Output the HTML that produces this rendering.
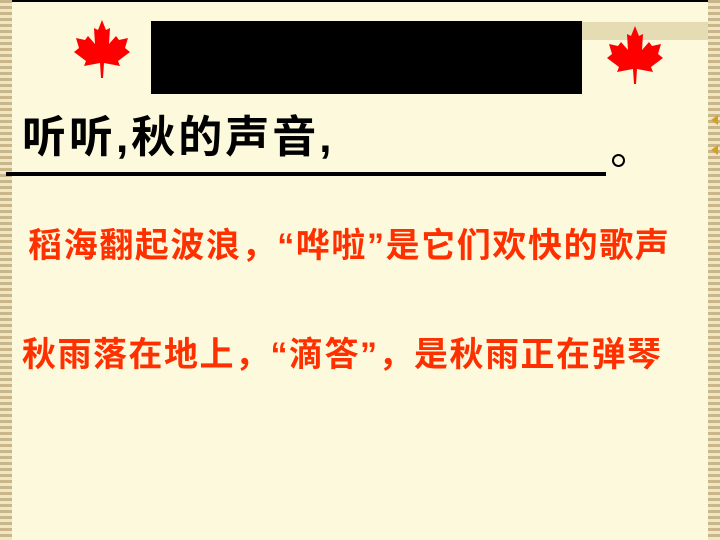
<!DOCTYPE html>
<html><head><meta charset="utf-8"><style>
body{margin:0;width:720px;height:540px;overflow:hidden;background:#fdf9dc;position:relative;font-family:"Liberation Sans","Noto Sans CJK SC",sans-serif}
.bl{position:absolute;left:0;top:0;width:12px;height:540px;background:repeating-linear-gradient(180deg,#c9b68a 0 3px,#efe6c4 3px 6px);}
.br{position:absolute;right:0;top:0;width:12px;height:540px;background:repeating-linear-gradient(180deg,#c9b68a 0 3px,#efe6c4 3px 6px);}
.top{position:absolute;left:0;top:0;width:720px;height:2px;background:#000}
.blk{position:absolute;left:151px;top:21px;width:431px;height:73px;background:#000}
.band{position:absolute;left:582px;top:22px;width:126px;height:18px;background:#e6dcb4}
.t{position:absolute;left:22px;top:101px;font-size:44px;font-weight:bold;color:#000;white-space:nowrap;letter-spacing:3px}
.ul{position:absolute;left:6px;top:172px;width:600px;height:4px;background:#000}
.o{position:absolute;left:612px;top:154px;width:9px;height:9px;border:2px solid #000;border-radius:50%}
.r{position:absolute;font-size:34px;font-weight:bold;color:#ff3000;white-space:nowrap}
</style></head><body>
<div class="top"></div><div class="bl"></div><div class="br"></div>
<div class="band"></div>
<div class="blk"></div>
<svg style="position:absolute;left:70px;top:18px" width="64" height="62" viewBox="0 0 64 62"><path fill="#f00" d="M32 2 L36 12 L40 10 L39 26 L46 18 L49 22 L58 20 L55 30 L60 34 L48 43 L50 48 L34 45 L33 60 L31 60 L30 45 L14 48 L16 43 L4 34 L9 30 L6 20 L15 22 L18 18 L25 26 L24 10 L28 12 Z"/></svg>
<svg style="position:absolute;left:603px;top:24px" width="64" height="62" viewBox="0 0 64 62"><path fill="#f00" d="M32 2 L36 12 L40 10 L39 26 L46 18 L49 22 L58 20 L55 30 L60 34 L48 43 L50 48 L34 45 L33 60 L31 60 L30 45 L14 48 L16 43 L4 34 L9 30 L6 20 L15 22 L18 18 L25 26 L24 10 L28 12 Z"/></svg>
<div class="t">听听,秋的声音,</div>
<div class="ul"></div><div class="o"></div>
<div class="r" style="left:28px;top:218px;letter-spacing:1.6px">稻海翻起波浪，“哗啦”是它们欢快的歌声</div>
<div class="r" style="left:22px;top:327px;letter-spacing:1.5px">秋雨落在地上，“滴答”，是秋雨正在弹琴</div>
<div style="position:absolute;left:706px;top:115px;width:0;height:0;border:5px solid transparent;border-right:7px solid #d4a020"></div>
<div style="position:absolute;left:706px;top:145px;width:0;height:0;border:5px solid transparent;border-right:7px solid #d4a020"></div>
</body></html>
